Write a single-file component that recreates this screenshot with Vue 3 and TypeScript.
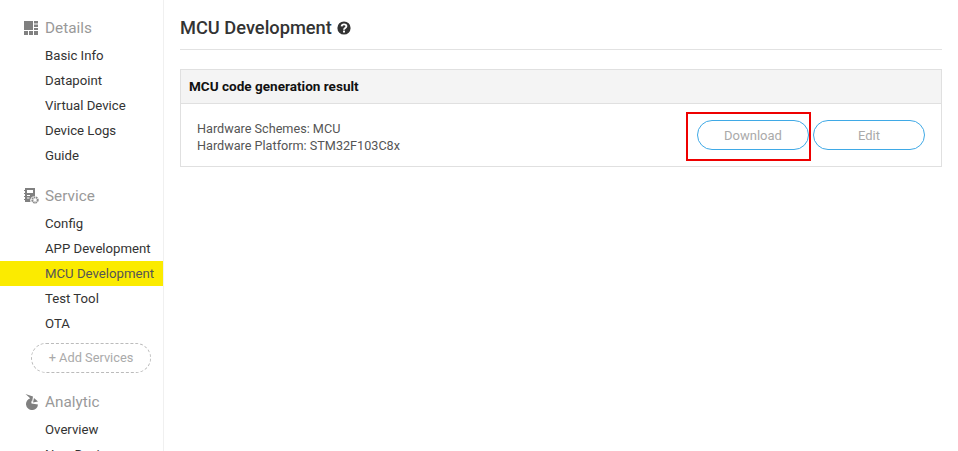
<script setup lang="ts">
const groups = [
  { title: 'Details', icon: 'details', items: ['Basic Info', 'Datapoint', 'Virtual Device', 'Device Logs', 'Guide'] },
  { title: 'Service', icon: 'service', items: ['Config', 'APP Development', 'MCU Development', 'Test Tool', 'OTA'], add: true },
  { title: 'Analytic', icon: 'analytic', items: ['Overview', 'New Device'] },
]
const active = 'MCU Development'
</script>

<template>
  <div class="page">
    <aside class="sidebar">
      <section v-for="g in groups" :key="g.title" class="group">
        <h3 class="group-title">
          <svg v-if="g.icon === 'details'" class="gi" viewBox="0 0 14 14">
            <path fill="#808080" d="M0 0h9v9H0zM10 0h4v2.5h-4zM10 3.5h4V6h-4zM10 7h4v2h-4zM0 10h4v4H0zM5 10h4v4H5zM10 10h4v4h-4z" />
          </svg>
          <svg v-else-if="g.icon === 'service'" class="gi tall" viewBox="0 0 15 16">
            <path fill="#808080" d="M1 0h10v8a4.5 4.5 0 0 0-4.5 6H1z" />
            <path fill="#808080" d="M0 2h1v1H0zM0 5h1v1H0zM0 8h1v1H0zM0 11h1v1H0z" />
            <path fill="#fff" d="M3 2h6v3H3zM3 7h3v1H3zM3 9.500h2.500v1H3z" />
            <circle cx="11" cy="12" r="2.700" fill="none" stroke="#8c8c8c" stroke-width="2" stroke-dasharray="1.600 .6" />
          </svg>
          <svg v-else class="gi tall" viewBox="0 0 15 16">
            <path fill="#808080" d="M6.800 4.200A6 6 0 1 0 14 10.500L7.500 9.500z" />
            <path fill="#808080" d="M1.500 0 9 2.600 8 8.200 5.400 3.400z" />
            <path fill="#808080" d="M10 4l4 3.400-5 1.200z" />
          </svg>
          {{ g.title }}
        </h3>
        <ul class="items">
          <li v-for="it in g.items" :key="it" :class="{ active: it === active }">{{ it }}</li>
        </ul>
        <div v-if="g.add" class="add">+ Add Services</div>
      </section>
    </aside>
    <main class="main">
      <h1 class="title">
        MCU Development
        <svg class="help" viewBox="0 0 14 14">
          <circle cx="7" cy="7" r="6.600" fill="#333" />
          <path fill="none" stroke="#fff" stroke-width="1.900" d="M4.600 5.400C4.800 4 5.800 3.400 7 3.400c1.400 0 2.400.8 2.400 1.900 0 1.700-2.400 1.600-2.400 3.400" />
          <rect x="6" y="9.600" width="2" height="1.900" fill="#fff" />
        </svg>
      </h1>
      <div class="panel">
        <div class="panel-head">MCU code generation result</div>
        <div class="panel-body">
          <div class="info">
            <div>Hardware Schemes: MCU</div>
            <div>Hardware Platform: STM32F103C8x</div>
          </div>
          <div class="actions">
            <span class="highlight"><button class="btn">Download</button></span>
            <button class="btn">Edit</button>
          </div>
        </div>
      </div>
    </main>
  </div>
</template>

<style>
html, body { margin: 0; background: #fff; overflow: hidden; }
</style>

<style scoped>
.page {
  display: flex;
  width: 958px;
  height: 451px;
  overflow: hidden;
  font-family: Roboto, "Noto Sans", sans-serif;
  color: #333;
}
.sidebar {
  width: 163px;
  height: 435px;
  flex: none;
  border-right: 1px solid #f0f0f0;
  padding-top: 16px;
  overflow: hidden;
}
.group { padding-bottom: 16px; }
.group-title {
  display: flex;
  align-items: center;
  height: 24px;
  margin: 0 0 3px;
  padding-left: 24px;
  font-size: 15.3px;
  font-weight: 400;
  color: #999;
}
.gi { width: 14px; height: 14px; margin-right: 7px; flex: none; }
.gi.tall { height: 16px; width: 15px; margin-right: 6px; }
.items { list-style: none; margin: 0; padding: 0; }
.items li {
  height: 25px;
  line-height: 25px;
  padding-left: 45px;
  font-size: 13.2px;
  color: #333;
}
.items li.active { background: #fbeb00; color: #555; }
.add {
  width: 118px;
  height: 28px;
  line-height: 28px;
  margin: 7px 0 1px 31px;
  border: 1px dashed #bbb;
  border-radius: 15px;
  text-align: center;
  font-size: 12.8px;
  color: #aaa;
}
.main { flex: 1; padding: 0 16px; min-width: 0; }
.title {
  display: flex;
  align-items: center;
  gap: 5px;
  height: 43px;
  padding-top: 6px;
  margin: 0 0 19px;
  border-bottom: 1px solid #e2e2e2;
  font-size: 18.25px;
  font-weight: 500;
  color: #333;
}
.help { width: 14px; height: 14px; }
.panel { border: 1px solid #e0e0e0; }
.panel-head {
  height: 33px;
  line-height: 33px;
  padding-left: 8px;
  background: #f4f4f4;
  border-bottom: 1px solid #e0e0e0;
  font-size: 13.55px;
  font-weight: 700;
  color: #111;
}
.panel-body {
  display: flex;
  align-items: center;
  justify-content: space-between;
  height: 62px;
  padding: 0 16px;
}
.info { font-size: 12.65px; line-height: 17px; color: #555; padding-top: 4px; }
.actions { display: flex; align-items: center; gap: 4px; }
.highlight {
  display: flex;
  margin: -8px -2px -11px 0;
  padding: 6px 0 9px 9px;
  border: 2px solid #ee0000;
}
.btn {
  width: 112px;
  height: 30px;
  padding: 0;
  border: 1px solid #3fa9e6;
  border-radius: 15px;
  background: #fff;
  font: inherit;
  font-size: 13px;
  color: #aaa;
}
</style>
